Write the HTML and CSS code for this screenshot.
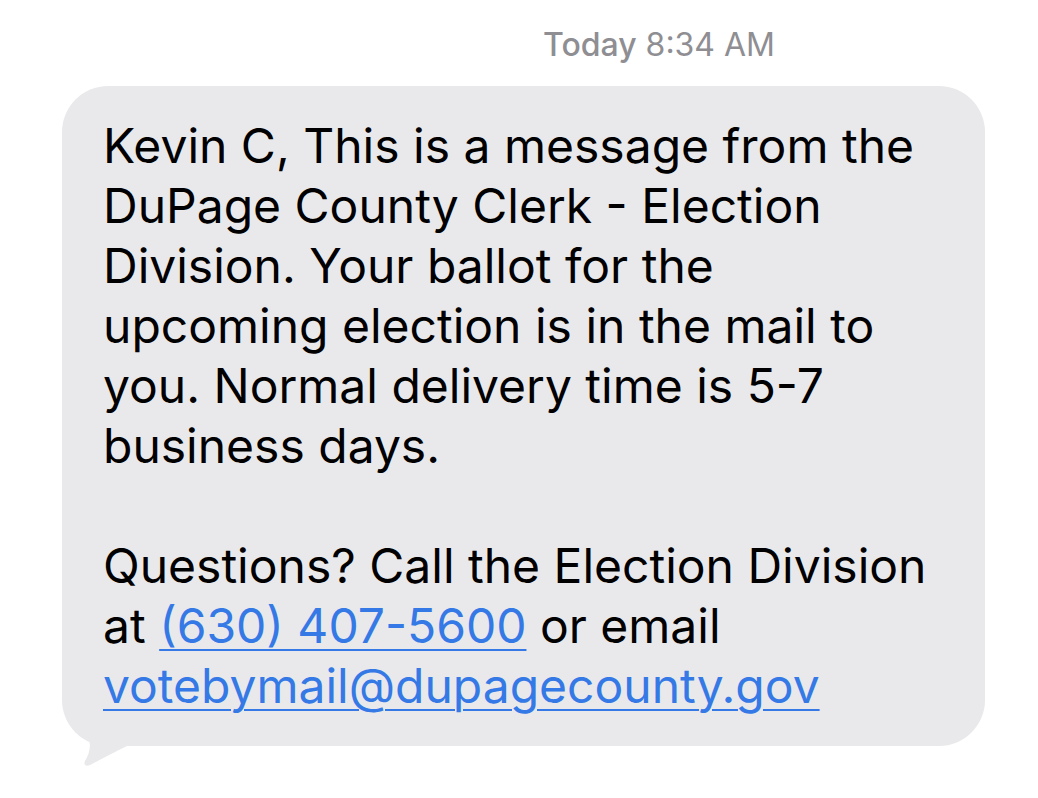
FILE: index.html
```html
<!DOCTYPE html>
<html lang="en">
<head>
<meta charset="utf-8">
<link rel="stylesheet" href="styles.css">
</head>
<body>
<div class="screen">
  <div class="stamp"><span class="day">Today</span> 8:34 AM</div>
  <div class="bubble-row">
    <div class="bubble">
      <svg class="tail" width="80" height="90" viewBox="0 0 80 90"><path d="M0 0 L0 7 C1 28 13 42 25 51 C30 56 28 67 23 75 C21 79 24 81 28 79 C40 73 52 66 65 60 L80 60 L80 0 Z" fill="#e9e9eb"/></svg>
      <p class="msg">Kevin C, This is a message from the DuPage County Clerk - Election Division. Your ballot for the upcoming election is in the mail to you. Normal delivery time is 5-7 business days.</p>
      <p class="msg gap">Questions? Call the Election Division at <a class="link" href="#">(630) 407-5600</a> or email <a class="link" href="#">votebymail@dupagecounty.gov</a></p>
    </div>
  </div>
</div>
</body>
</html>
```
FILE: styles.css
```css
* { box-sizing: border-box; }
html, body { margin: 0; padding: 0; background: #fff; }
body { font-family: Inter, "Noto Sans", sans-serif; }
.screen { width: 1038px; height: 798px; overflow: hidden; }
.stamp {
  padding: 26px 0 0 543px;
  height: 86px;
  font-size: 32px;
  line-height: 38px;
  color: #8e8e93;
}
.day { font-weight: 500; }
.bubble-row { padding-left: 62px; }
.bubble {
  position: relative;
  z-index: 0;
  width: 923px;
  background: #e9e9eb;
  border-radius: 46px;
  padding: 30px 44px 30px 41px;
  color: #000;
}
.msg {
  margin: 0;
  font-size: 48px;
  line-height: 60px;
}
.gap { margin-top: 60px; }
.link { color: #3579e6; text-decoration: underline; text-decoration-thickness: 2px; text-underline-offset: 6px; }
.tail { position: absolute; left: 0; top: 600px; z-index: -1; }
```
